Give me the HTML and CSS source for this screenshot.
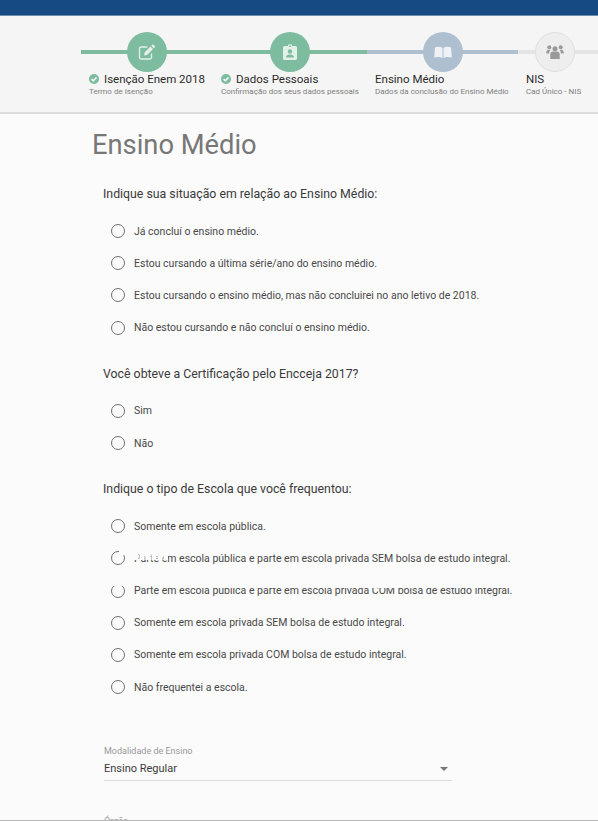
FILE: index.html
```html
<!DOCTYPE html>
<html lang="pt-BR">
<head>
  <meta charset="UTF-8">
  <meta name="viewport" content="width=device-width, initial-scale=1.0">
  <title>Ensino Médio</title>
  <link rel="stylesheet" href="styles.css">
</head>
<body>
  <div class="top-bar"></div>

  <div class="stepper">
    <div class="step step-done step-w1">
      <div class="step-circle">
        <svg class="step-icon" viewBox="0 0 18 18">
          <path d="M13.500 10.500v3.700a1.800 1.800 0 0 1-1.800 1.800H3.300a1.800 1.800 0 0 1-1.800-1.800V5.800A1.800 1.800 0 0 1 3.300 4h6" fill="none" stroke="#e4f1ea" stroke-width="1.300"/>
          <path d="M6.500 9.500 12.500 3.500l2.500 2.500-6 6-2.800.400zM13.300 2.700l1-1a.8.8 0 0 1 1.100 0l1.400 1.400a.8.8 0 0 1 0 1.100l-1 1z" fill="#e4f1ea"/>
        </svg>
      </div>
      <div class="step-title">
        <svg class="check" viewBox="0 0 10 10"><circle cx="5" cy="5" r="5" fill="#7ebc9f"/><path d="M2.600 5.100 4.400 6.800 7.500 3.500" fill="none" stroke="#fff" stroke-width="1.500"/></svg>
        Isenção Enem 2018
      </div>
      <div class="step-sub">Termo de Isenção</div>
    </div>

    <div class="step step-done step-w2">
      <div class="step-circle">
        <svg class="step-icon" viewBox="0 0 18 18">
          <path d="M3.500 3H7V1.500h4V3h3.500A1.500 1.500 0 0 1 16 4.500v11a1.500 1.500 0 0 1-1.500 1.500h-11A1.500 1.500 0 0 1 2 15.500v-11A1.500 1.500 0 0 1 3.500 3z" fill="#e4f1ea"/>
          <circle cx="9" cy="8.500" r="2.200" fill="#7ebc9f"/>
          <path d="M5 14.500c0-2 1.500-3 4-3s4 1 4 3z" fill="#7ebc9f"/>
          <rect x="7.800" y="2.700" width="2.400" height="1.200" fill="#7ebc9f"/>
        </svg>
      </div>
      <div class="step-title">
        <svg class="check" viewBox="0 0 10 10"><circle cx="5" cy="5" r="5" fill="#7ebc9f"/><path d="M2.600 5.100 4.400 6.800 7.500 3.500" fill="none" stroke="#fff" stroke-width="1.500"/></svg>
        Dados Pessoais
      </div>
      <div class="step-sub">Confirmação dos seus dados pessoais</div>
    </div>

    <div class="step step-current step-w3">
      <div class="step-circle">
        <svg class="step-icon" viewBox="0 0 18 18">
          <path d="M1 4.500C3.500 3.300 6.500 3.300 8.500 5v10C6.500 13.700 3 13.700.2 14.500zM17 4.500C14.500 3.300 11.500 3.300 9.500 5v10c2-1.300 5.500-1.300 8.300-.5z" fill="#eef2f5"/>
        </svg>
      </div>
      <div class="step-title">Ensino Médio</div>
      <div class="step-sub">Dados da conclusão do Ensino Médio</div>
    </div>

    <div class="step step-todo step-w4">
      <div class="step-circle">
        <svg class="step-icon" viewBox="0 0 18 18">
          <circle cx="9" cy="5.800" r="2.500" fill="#9a9a9a"/>
          <circle cx="3.300" cy="4.200" r="2" fill="#9a9a9a"/>
          <circle cx="14.700" cy="4.200" r="2" fill="#9a9a9a"/>
          <path d="M.2 10.500c0-2.500.800-3.700 2.300-3.700h2c-.9.900-1.300 2-1.300 3.700zM17.800 10.500c0-2.500-.8-3.700-2.300-3.700h-2c.9.900 1.300 2 1.300 3.700z" fill="#9a9a9a"/>
          <path d="M4.300 16v-4.500c0-2 1.200-3 2.500-3h4.400c1.300 0 2.500 1 2.500 3V16z" fill="#9a9a9a"/>
        </svg>
      </div>
      <div class="step-title">NIS</div>
      <div class="step-sub">Cad Único - NIS</div>
    </div>

    <div class="step-tail"></div>
  </div>

  <div class="content">
    <h1 class="page-title">Ensino Médio</h1>

    <div class="question">
      <p class="question-text">Indique sua situação em relação ao Ensino Médio:</p>
      <label class="radio-row"><span class="radio"></span>Já concluí o ensino médio.</label>
      <label class="radio-row"><span class="radio"></span>Estou cursando a última série/ano do ensino médio.</label>
      <label class="radio-row"><span class="radio"></span>Estou cursando o ensino médio, mas não concluirei no ano letivo de 2018.</label>
      <label class="radio-row"><span class="radio"></span>Não estou cursando e não concluí o ensino médio.</label>
    </div>

    <div class="question">
      <p class="question-text">Você obteve a Certificação pelo Encceja 2017?</p>
      <label class="radio-row"><span class="radio"></span>Sim</label>
      <label class="radio-row"><span class="radio"></span>Não</label>
    </div>

    <div class="question">
      <p class="question-text">Indique o tipo de Escola que você frequentou:</p>
      <label class="radio-row"><span class="radio"></span>Somente em escola pública.</label>
      <label class="radio-row"><span class="radio"></span>Parte em escola pública e parte em escola privada SEM bolsa de estudo integral.
        <span class="wipe wipe-radio-a"></span><span class="wipe wipe-text-a"></span>
      </label>
      <label class="radio-row"><span class="radio"></span>Parte em escola pública e parte em escola privada COM bolsa de estudo integral.
        <span class="wipe wipe-radio-b"></span><span class="wipe wipe-text-b"></span>
      </label>
      <label class="radio-row"><span class="radio"></span>Somente em escola privada SEM bolsa de estudo integral.</label>
      <label class="radio-row"><span class="radio"></span>Somente em escola privada COM bolsa de estudo integral.</label>
      <label class="radio-row"><span class="radio"></span>Não frequentei a escola.</label>
    </div>

    <div class="field">
      <div class="field-label">Modalidade de Ensino</div>
      <div class="field-value">Ensino Regular<span class="caret"></span></div>
    </div>

    <div class="field-next">Órgão</div>
  </div>
  <div class="bottom-edge"></div>
</body>
</html>
```

FILE: styles.css
```css
html, body {
  margin: 0;
  padding: 0;
  height: 821px;
  overflow: hidden;
}
body {
  font-family: Roboto, Arial, sans-serif;
  background: #fbfbfb;
  color: #333;
}
.top-bar {
  height: 15px;
  background: #154a82;
  border-bottom: 1px solid #6d8db0;
}
.stepper {
  display: flex;
  height: 96px;
  padding-left: 81px;
  background: #f5f5f5;
  border-bottom: 2px solid #dcdcdc;
  overflow: hidden;
}
.step {
  position: relative;
  box-sizing: border-box;
  flex: none;
  padding: 16px 8px 0;
}
.step-w1 { width: 132px; }
.step-w2 { width: 154px; }
.step-w3 { width: 151px; }
.step-w4 { width: 74px; }
.step::before,
.step-tail::before {
  content: "";
  position: absolute;
  left: 0;
  right: 0;
  top: 34px;
  height: 4px;
}
.step-done::before { background: #7ebc9f; }
.step-current::before { background: #aec0d0; }
.step-todo::before { background: #e4e4e4; }
.step-tail {
  position: relative;
  flex: 1;
}
.step-tail::before { background: #e4e4e4; }
.step-circle {
  position: relative;
  box-sizing: border-box;
  width: 40px;
  height: 40px;
  margin: 0 auto;
  border-radius: 50%;
  display: flex;
  align-items: center;
  justify-content: center;
}
.step-done .step-circle { background: #7ebc9f; }
.step-current .step-circle { background: #aec0d0; }
.step-todo .step-circle {
  background: #eee;
  border: 1px solid #e0e0e0;
}
.step-icon {
  width: 18px;
  height: 18px;
}
.step-title {
  display: flex;
  align-items: center;
  gap: 5px;
  font-size: 11.500px;
  line-height: 14px;
  color: #2b2b2b;
  white-space: nowrap;
}
.check {
  flex: none;
  width: 10px;
  height: 10px;
}
.step-sub {
  font-size: 8px;
  line-height: 12px;
  color: #808080;
  white-space: nowrap;
}
.content {
  padding: 0 92px;
}
.page-title {
  margin: 15px 0 3px;
  font-size: 27.300px;
  line-height: 32px;
  font-weight: 400;
  color: #777;
}
.question {
  padding-left: 11px;
}
.question-text {
  margin: 0;
  padding-top: 20px;
  font-size: 12.320px;
  line-height: 20px;
  color: #3a3a3a;
}
.radio-row {
  position: relative;
  display: flex;
  align-items: center;
  height: 32.200px;
  margin-left: 8px;
  font-size: 10.500px;
  color: #484848;
  white-space: nowrap;
}
.question-text + .radio-row {
  margin-top: 11px;
}
.radio {
  box-sizing: border-box;
  flex: none;
  width: 14px;
  height: 14px;
  margin-right: 9px;
  border: 1.500px solid #707070;
  border-radius: 50%;
}
/* white patches where the capture lost pixels */
.wipe {
  position: absolute;
  background: #fbfbfb;
}
.wipe-radio-a {
  left: 8px;
  top: 7px;
  width: 7px;
  height: 6px;
}
.wipe-text-a {
  left: 23px;
  top: 11px;
  width: 34px;
  height: 7px;
  background: repeating-linear-gradient(90deg, #fbfbfb 0 4px, rgba(251,251,251,0.6) 4px 6px);
}
.wipe-radio-b {
  left: 3px;
  top: 8px;
  width: 9px;
  height: 3px;
}
.wipe-text-b {
  left: 82px;
  top: 11px;
  width: 322px;
  height: 2px;
}
.field {
  width: 348px;
  margin: 42px 0 0 12px;
  border-bottom: 1px solid #ddd;
}
.field-label {
  font-size: 9px;
  line-height: 12px;
  color: #999;
}
.field-value {
  display: flex;
  align-items: center;
  justify-content: space-between;
  height: 23px;
  font-size: 11px;
  color: #3a3a3a;
}
.caret {
  margin-right: 4px;
  border-left: 4px solid transparent;
  border-right: 4px solid transparent;
  border-top: 4px solid #777;
}
.field-next {
  margin: 34px 0 0 12px;
  font-size: 9px;
  line-height: 12px;
  color: #999;
}
.bottom-edge {
  position: fixed;
  left: 0;
  right: 0;
  bottom: 0;
  height: 1px;
  background: #b5b5b5;
}
```
